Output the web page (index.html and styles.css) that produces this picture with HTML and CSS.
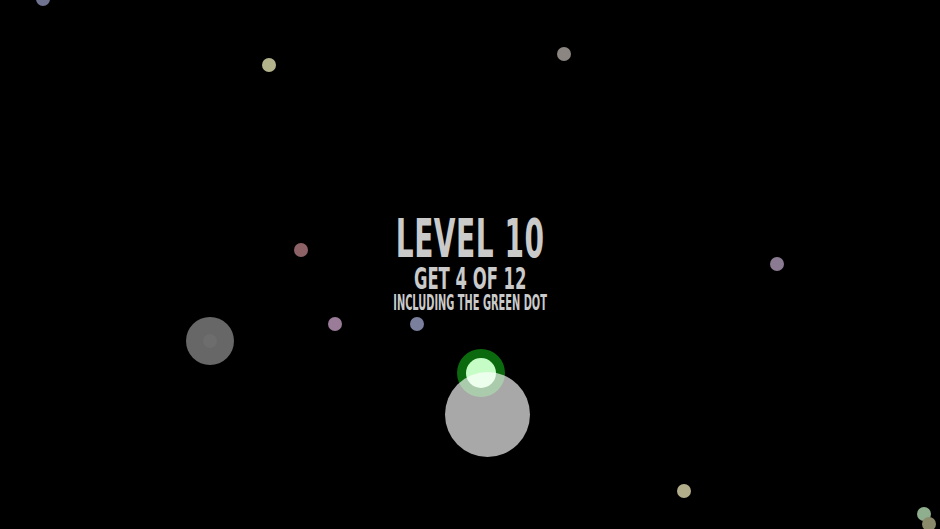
FILE: index.html
```html
<!DOCTYPE html>
<html>
<head>
<meta charset="utf-8">
<link rel="stylesheet" href="styles.css">
</head>
<body>
<div class="stage">
  <div class="dot" style="left:36px;top:-8px;background:#6f7390"></div>
  <div class="dot" style="left:262px;top:58px;background:#b4b48c"></div>
  <div class="dot" style="left:557px;top:47px;background:#8b8682"></div>
  <div class="dot" style="left:294px;top:243px;background:#8c6266"></div>
  <div class="dot" style="left:328px;top:317px;background:#9a7b98"></div>
  <div class="dot" style="left:410px;top:317px;background:#7b7f9e"></div>
  <div class="dot" style="left:770px;top:257px;background:#8b7b92"></div>
  <div class="dot" style="left:677px;top:484px;background:#b2ae8c"></div>
  <div class="dot" style="left:917px;top:507px;background:#8fae8e"></div>
  <div class="dot" style="left:922px;top:517px;background:#8b8a6a"></div>

  <div class="big-gray"><div class="big-gray-core"></div></div>

  <div class="green"><div class="green-core"></div></div>
  <div class="player"></div>

  <div class="title">
    <div class="line l1"><span>LEVEL 10</span></div>
    <div class="line l2"><span>GET 4 OF 12</span></div>
    <div class="line l3"><span>INCLUDING THE GREEN DOT</span></div>
  </div>
</div>
</body>
</html>
```
FILE: styles.css
```css
html, body {
  margin: 0;
  padding: 0;
  background: #000;
  width: 940px;
  height: 529px;
  overflow: hidden;
}
.stage {
  position: relative;
  width: 940px;
  height: 529px;
  background: #000;
  overflow: hidden;
}
.dot {
  position: absolute;
  width: 14px;
  height: 14px;
  border-radius: 50%;
}
.big-gray {
  position: absolute;
  left: 186px;
  top: 317px;
  width: 48px;
  height: 48px;
  border-radius: 50%;
  background: #676767;
  display: flex;
  align-items: center;
  justify-content: center;
}
.big-gray-core {
  width: 14px;
  height: 14px;
  border-radius: 50%;
  background: #6d6d6d;
}
.green {
  position: absolute;
  left: 457px;
  top: 349px;
  width: 48px;
  height: 48px;
  border-radius: 50%;
  background: #0b6a0d;
  display: flex;
  align-items: center;
  justify-content: center;
}
.green-core {
  width: 30px;
  height: 30px;
  border-radius: 50%;
  background: #c6fdc6;
}
.player {
  position: absolute;
  left: 445px;
  top: 372px;
  width: 85px;
  height: 85px;
  border-radius: 50%;
  background: rgba(255, 255, 255, 0.66);
}
.title {
  padding-top: 215px;
  display: flex;
  flex-direction: column;
  align-items: center;
  color: #cacaca;
  font-family: "DejaVu Sans", sans-serif;
  font-weight: bold;
}
.line {
  display: flex;
  justify-content: center;
  width: 100%;
}
.line span {
  display: inline-block;
  white-space: nowrap;
}
.l1 {
  font-size: 54px;
  line-height: 48px;
}
.l1 span { transform: scaleX(0.52); letter-spacing: 1px; }
.l2 {
  font-size: 31px;
  line-height: 30px;
}
.l2 span { transform: scaleX(0.53); }
.l3 {
  font-size: 20.5px;
  line-height: 20px;
}
.l3 span { transform: scaleX(0.48); }
```
